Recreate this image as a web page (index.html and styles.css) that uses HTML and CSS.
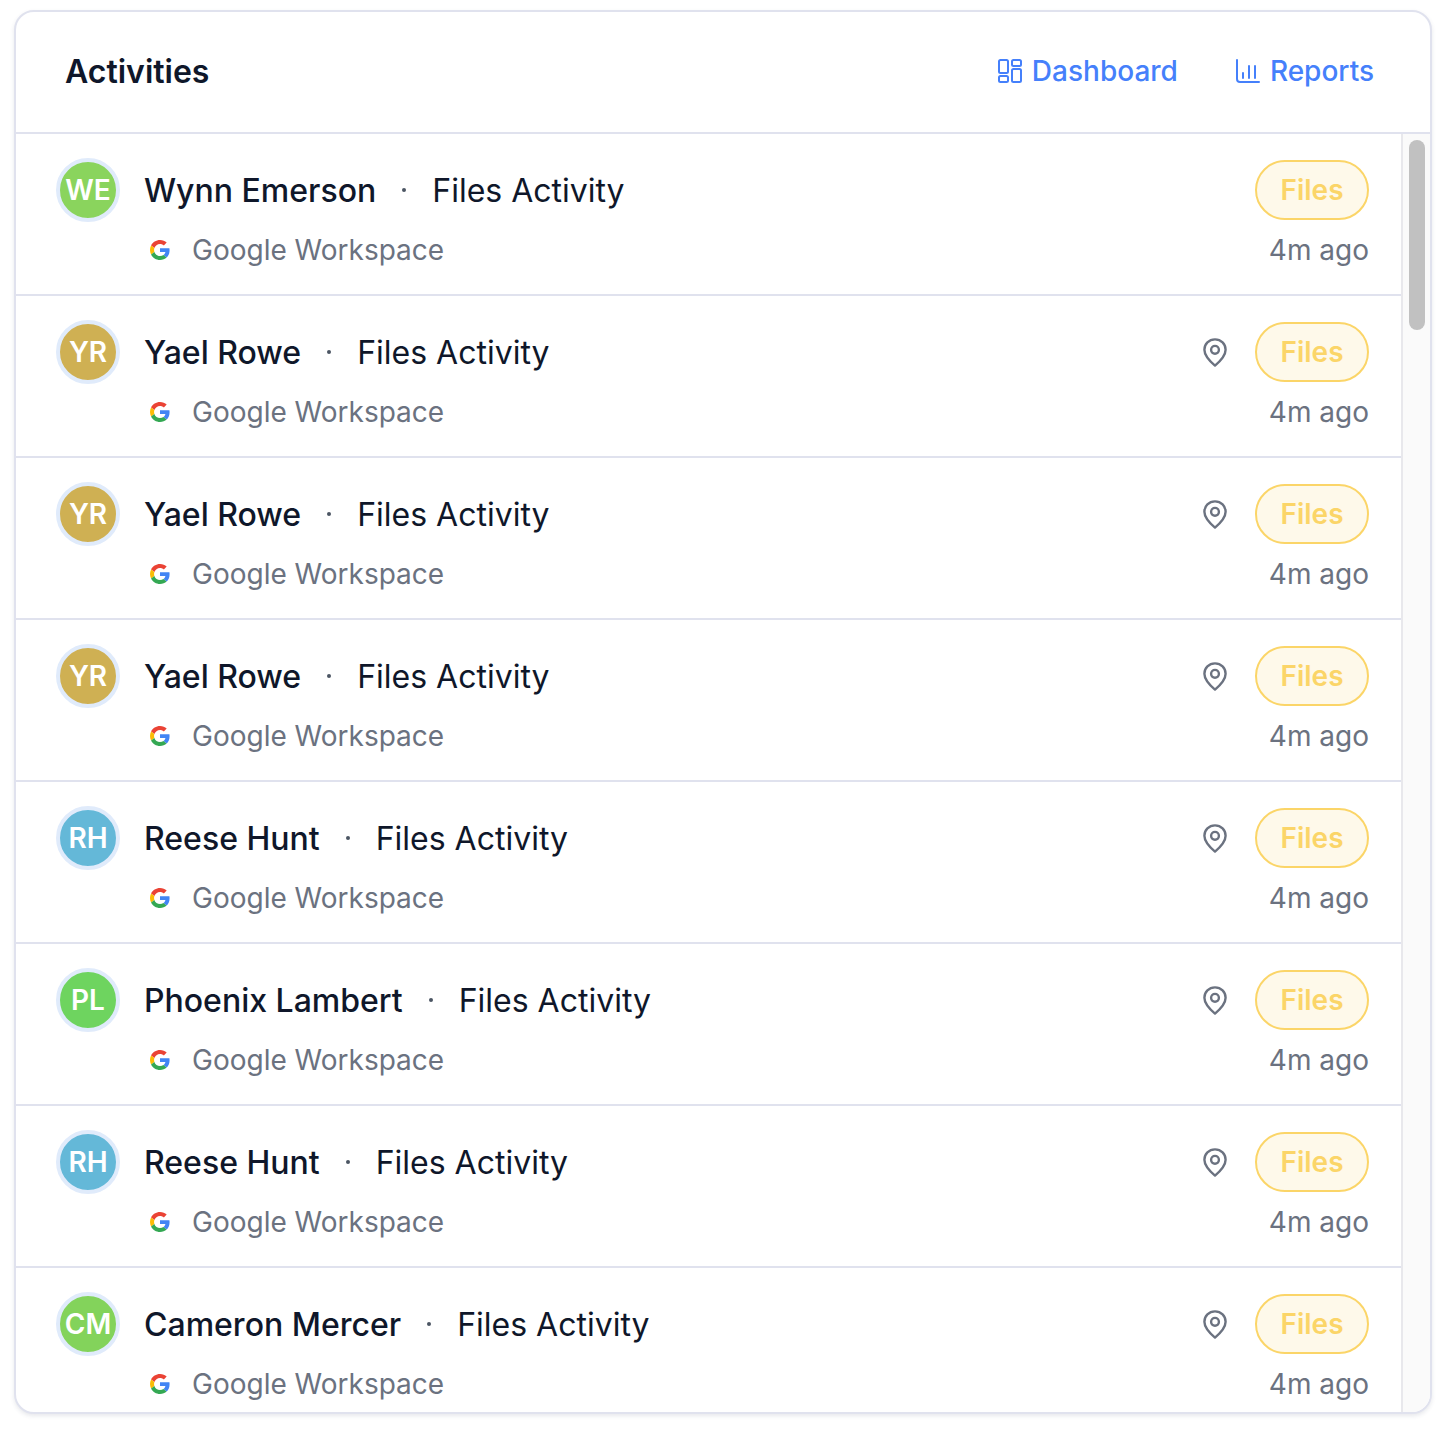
FILE: index.html
```html
<!DOCTYPE html>
<html lang="en">
<head>
    <meta charset="UTF-8">
    <meta name="viewport" content="width=device-width, initial-scale=1.0">
    <title>Activities</title>
    <link rel="stylesheet" href="styles.css">
</head>
<body>
    <svg class="icon-defs" aria-hidden="true">
        <symbol id="icon-google" viewBox="0 0 48 48">
            <path fill="#EA4335" d="M24 9.5c3.54 0 6.71 1.22 9.21 3.6l6.85-6.85C35.9 2.38 30.47 0 24 0 14.62 0 6.51 5.38 2.56 13.22l7.98 6.19C12.43 13.72 17.74 9.5 24 9.5z"/>
            <path fill="#4285F4" d="M46.98 24.55c0-1.57-.15-3.09-.38-4.55H24v9.02h12.94c-.58 2.96-2.26 5.48-4.78 7.18l7.73 6c4.51-4.18 7.09-10.36 7.09-17.65z"/>
            <path fill="#FBBC05" d="M10.53 28.59c-.48-1.45-.76-2.99-.76-4.59s.27-3.14.76-4.59l-7.98-6.19C.92 16.46 0 20.12 0 24c0 3.88.92 7.54 2.56 10.78l7.97-6.19z"/>
            <path fill="#34A853" d="M24 48c6.48 0 11.93-2.13 15.89-5.81l-7.73-6c-2.15 1.45-4.92 2.3-8.16 2.3-6.26 0-11.57-4.22-13.47-9.91l-7.98 6.19C6.51 42.62 14.62 48 24 48z"/>
        </symbol>
        <symbol id="icon-pin" viewBox="0 0 24 29">
            <path fill="none" stroke="currentColor" stroke-width="2.4" stroke-linejoin="round" d="M12 1.4C5.9 1.4 1.4 6 1.4 11.7c0 5.6 5.6 11.6 10.6 15.9 5-4.3 10.6-10.3 10.6-15.9C22.6 6 18.1 1.4 12 1.4z"/>
            <circle cx="12" cy="11.8" r="3.9" fill="none" stroke="currentColor" stroke-width="2.4"/>
        </symbol>
    </svg>

    <div class="card">
        <div class="card-header">
            <h1>Activities</h1>
            <div class="links">
                <a class="link">
                    <svg viewBox="0 0 24 24" width="24" height="24" fill="none" stroke="currentColor" stroke-width="2">
                        <rect x="1" y="1" width="9" height="13" rx="1.5"/>
                        <rect x="14" y="1" width="9" height="6" rx="1.5"/>
                        <rect x="1" y="17" width="9" height="6" rx="1.5"/>
                        <rect x="14" y="10" width="9" height="13" rx="1.5"/>
                    </svg>
                    Dashboard
                </a>
                <a class="link">
                    <svg viewBox="0 0 24 24" width="24" height="24" fill="none" stroke="currentColor" stroke-width="2" stroke-linecap="round">
                        <path d="M1 1v19a3 3 0 0 0 3 3h19"/>
                        <path d="M7 14v5M13 7v12M19 7v12"/>
                    </svg>
                    Reports
                </a>
            </div>
        </div>
        <div class="card-body">
            <div class="list">
                <div class="row">
                    <div class="row-top">
                        <div class="avatar avatar-we">WE</div>
                        <span class="name">Wynn Emerson</span>
                        <span class="dot"></span>
                        <span class="action">Files Activity</span>
                        <span class="pill">Files</span>
                    </div>
                    <div class="row-bottom">
                        <svg class="google" width="20" height="20"><use href="#icon-google"/></svg>
                        <span>Google Workspace</span>
                        <span class="time">4m ago</span>
                    </div>
                </div>
                <div class="row">
                    <div class="row-top">
                        <div class="avatar avatar-yr">YR</div>
                        <span class="name">Yael Rowe</span>
                        <span class="dot"></span>
                        <span class="action">Files Activity</span>
                        <svg class="pin" width="24" height="29"><use href="#icon-pin"/></svg>
                        <span class="pill">Files</span>
                    </div>
                    <div class="row-bottom">
                        <svg class="google" width="20" height="20"><use href="#icon-google"/></svg>
                        <span>Google Workspace</span>
                        <span class="time">4m ago</span>
                    </div>
                </div>
                <div class="row">
                    <div class="row-top">
                        <div class="avatar avatar-yr">YR</div>
                        <span class="name">Yael Rowe</span>
                        <span class="dot"></span>
                        <span class="action">Files Activity</span>
                        <svg class="pin" width="24" height="29"><use href="#icon-pin"/></svg>
                        <span class="pill">Files</span>
                    </div>
                    <div class="row-bottom">
                        <svg class="google" width="20" height="20"><use href="#icon-google"/></svg>
                        <span>Google Workspace</span>
                        <span class="time">4m ago</span>
                    </div>
                </div>
                <div class="row">
                    <div class="row-top">
                        <div class="avatar avatar-yr">YR</div>
                        <span class="name">Yael Rowe</span>
                        <span class="dot"></span>
                        <span class="action">Files Activity</span>
                        <svg class="pin" width="24" height="29"><use href="#icon-pin"/></svg>
                        <span class="pill">Files</span>
                    </div>
                    <div class="row-bottom">
                        <svg class="google" width="20" height="20"><use href="#icon-google"/></svg>
                        <span>Google Workspace</span>
                        <span class="time">4m ago</span>
                    </div>
                </div>
                <div class="row">
                    <div class="row-top">
                        <div class="avatar avatar-rh">RH</div>
                        <span class="name">Reese Hunt</span>
                        <span class="dot"></span>
                        <span class="action">Files Activity</span>
                        <svg class="pin" width="24" height="29"><use href="#icon-pin"/></svg>
                        <span class="pill">Files</span>
                    </div>
                    <div class="row-bottom">
                        <svg class="google" width="20" height="20"><use href="#icon-google"/></svg>
                        <span>Google Workspace</span>
                        <span class="time">4m ago</span>
                    </div>
                </div>
                <div class="row">
                    <div class="row-top">
                        <div class="avatar avatar-pl">PL</div>
                        <span class="name">Phoenix Lambert</span>
                        <span class="dot"></span>
                        <span class="action">Files Activity</span>
                        <svg class="pin" width="24" height="29"><use href="#icon-pin"/></svg>
                        <span class="pill">Files</span>
                    </div>
                    <div class="row-bottom">
                        <svg class="google" width="20" height="20"><use href="#icon-google"/></svg>
                        <span>Google Workspace</span>
                        <span class="time">4m ago</span>
                    </div>
                </div>
                <div class="row">
                    <div class="row-top">
                        <div class="avatar avatar-rh">RH</div>
                        <span class="name">Reese Hunt</span>
                        <span class="dot"></span>
                        <span class="action">Files Activity</span>
                        <svg class="pin" width="24" height="29"><use href="#icon-pin"/></svg>
                        <span class="pill">Files</span>
                    </div>
                    <div class="row-bottom">
                        <svg class="google" width="20" height="20"><use href="#icon-google"/></svg>
                        <span>Google Workspace</span>
                        <span class="time">4m ago</span>
                    </div>
                </div>
                <div class="row">
                    <div class="row-top">
                        <div class="avatar avatar-cm">CM</div>
                        <span class="name">Cameron Mercer</span>
                        <span class="dot"></span>
                        <span class="action">Files Activity</span>
                        <svg class="pin" width="24" height="29"><use href="#icon-pin"/></svg>
                        <span class="pill">Files</span>
                    </div>
                    <div class="row-bottom">
                        <svg class="google" width="20" height="20"><use href="#icon-google"/></svg>
                        <span>Google Workspace</span>
                        <span class="time">4m ago</span>
                    </div>
                </div>
            </div>
            <div class="scrollbar">
                <div class="scroll-thumb"></div>
            </div>
        </div>
    </div>
</body>
</html>
```

FILE: styles.css
```css
* {
    box-sizing: border-box;
}
body {
    font-family: Inter, "Liberation Sans", sans-serif;
    margin: 0;
    padding: 10px 16px 16px 14px;
    background-color: #fff;
    color: #111827;
}
.icon-defs {
    display: none;
}
.card {
    height: 1404px;
    display: flex;
    flex-direction: column;
    border: 2px solid #e0e2ee;
    border-radius: 20px;
    background-color: #fff;
    box-shadow: 0 2px 4px rgba(60, 64, 100, 0.12);
    overflow: hidden;
}
.card-header {
    height: 122px;
    flex: none;
    display: flex;
    align-items: center;
    justify-content: space-between;
    padding: 0 56px 2px 49px;
    border-bottom: 2px solid #e0e2ee;
}
.card-header h1 {
    margin: 0;
    font-size: 32px;
    font-weight: 600;
    color: #0f172a;
}
.links {
    display: flex;
    gap: 58px;
}
.link {
    display: flex;
    align-items: center;
    gap: 10px;
    font-size: 28px;
    font-weight: 500;
    color: #4580fb;
}
.card-body {
    flex: 1;
    min-height: 0;
    display: flex;
}
.list {
    flex: 1;
    min-width: 0;
    overflow: hidden;
}
.row {
    height: 162px;
    padding: 24px 32px 0 40px;
    border-bottom: 2px solid #e0e2ee;
}
.row-top {
    height: 64px;
    display: flex;
    align-items: center;
}
.avatar {
    width: 64px;
    height: 64px;
    flex: none;
    display: flex;
    align-items: center;
    justify-content: center;
    margin-right: 24px;
    border: 4px solid #e0ebfb;
    border-radius: 50%;
    font-size: 28px;
    font-weight: 600;
    color: #fff;
}
.avatar-we {
    background-color: #8ad45d;
}
.avatar-yr {
    background-color: #cfb053;
}
.avatar-rh {
    background-color: #64b8d8;
}
.avatar-pl {
    background-color: #6ed45f;
}
.avatar-cm {
    background-color: #83d35b;
}
.name {
    font-size: 32px;
    font-weight: 500;
    color: #0f172a;
}
.dot {
    width: 4px;
    height: 4px;
    margin: 0 26px;
    background-color: #4b5563;
    border-radius: 50%;
}
.action {
    font-size: 32px;
    color: #0f172a;
}
.pin {
    margin-left: auto;
    color: #6b7280;
}
.pill {
    width: 114px;
    height: 60px;
    display: flex;
    align-items: center;
    justify-content: center;
    margin-left: 28px;
    border: 2px solid #fbd568;
    border-radius: 30px;
    background-color: #fef9ea;
    font-size: 28px;
    font-weight: 600;
    color: #fbd568;
}
.pin + .pill {
    margin-left: 28px;
}
.action + .pill {
    margin-left: auto;
}
.row-bottom {
    height: 40px;
    margin-top: 8px;
    display: flex;
    align-items: center;
    gap: 22px;
    padding-left: 94px;
    font-size: 28px;
    color: #6b7280;
}
.time {
    margin-left: auto;
}
.scrollbar {
    width: 29px;
    flex: none;
    padding: 6px 5px 0 6px;
    border-left: 2px solid #e8e8ec;
    background-color: #fafafa;
}
.scroll-thumb {
    width: 16px;
    height: 190px;
    border-radius: 8px;
    background-color: #c1c1c1;
}
```
